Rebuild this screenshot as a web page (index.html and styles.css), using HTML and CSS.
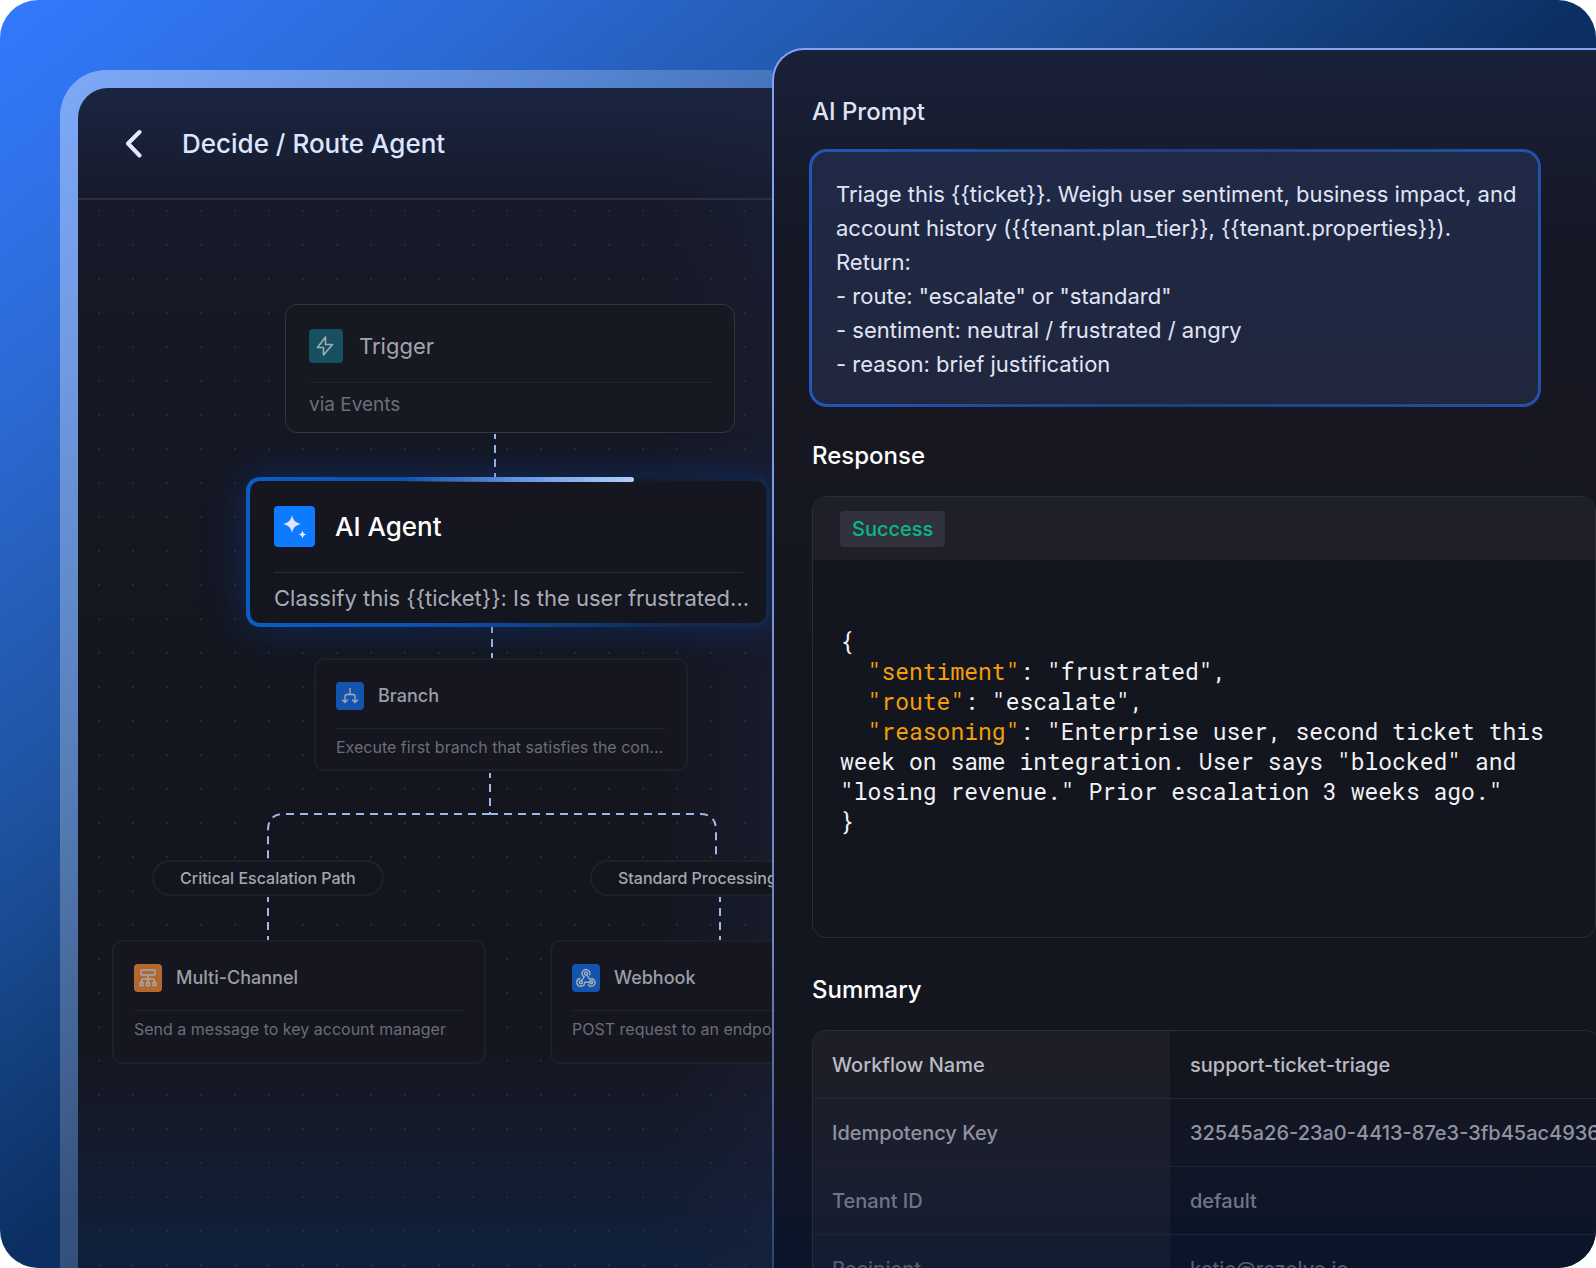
FILE: index.html
```html
<!DOCTYPE html>
<html lang="en">
<head>
    <meta charset="UTF-8">
    <meta name="viewport" content="width=device-width, initial-scale=1.0">
    <title>Decide / Route Agent</title>
    <link rel="stylesheet" href="styles.css">
</head>
<body>
    <main class="stage">

        <!-- Workflow window -->
        <section class="workflow">
            <div class="workflow-body">
                <header class="workflow-header">
                    <button class="back-btn" type="button" aria-label="Back">
                        <svg width="20" height="30" viewBox="0 0 20 30" fill="none" stroke="currentColor" stroke-width="4" stroke-linecap="round" stroke-linejoin="round">
                            <path d="M15.500 4 4 15.500 15.500 27.500"/>
                        </svg>
                    </button>
                    <h1>Decide / Route Agent</h1>
                </header>

                <div class="canvas">
                    <svg class="links" width="694" height="900" fill="none">
                        <g stroke="#9fb8e8" stroke-width="2" stroke-dasharray="8 6">
                            <path d="M417 234v43" stroke-dashoffset="3"/>
                            <path d="M414 427v32" stroke-dashoffset="2"/>
                            <path d="M412 573v41" stroke-dashoffset="3"/>
                            <path d="M412 614H206q-16 0-16 16v30"/>
                            <path d="M412 614h210q16 0 16 16v30"/>
                            <path d="M190 697v43" stroke-dashoffset="3"/>
                            <path d="M642 697v43" stroke-dashoffset="3"/>
                        </g>
                    </svg>

                    <article class="node node-trigger">
                        <div class="node-head">
                            <span class="node-icon teal">
                                <svg width="20" height="20" viewBox="0 0 20 20" fill="none" stroke="currentColor" stroke-width="1.6" stroke-linejoin="round">
                                    <path d="M9.500 1 1.500 11.500H7.500V19L16.500 8.500H9.500Z"/>
                                </svg>
                            </span>
                            <h2>Trigger</h2>
                        </div>
                        <p>via Events</p>
                    </article>

                    <article class="node node-agent">
                        <div class="node-head">
                            <span class="node-icon bright">
                                <svg width="40" height="40" viewBox="0 0 40 40" fill="#dfe6fb">
                                    <path d="M17 8c1.200 5.500 3.400 7.800 9 9-5.600 1.200-7.800 3.500-9 9-1.200-5.500-3.400-7.800-9-9 5.600-1.200 7.800-3.500 9-9z"/>
                                    <path d="M27.500 23.500c.6 2.500 1.500 3.400 4 4-2.500.6-3.400 1.500-4 4-.6-2.500-1.500-3.400-4-4 2.500-.6 3.400-1.500 4-4z"/>
                                </svg>
                            </span>
                            <h2>AI Agent</h2>
                        </div>
                        <p>Classify this {{ticket}}: Is the user frustrated...</p>
                    </article>

                    <article class="node node-small node-branch">
                        <div class="node-head">
                            <span class="node-icon blue">
                                <svg width="18" height="18" viewBox="0 0 18 18" fill="none" stroke="currentColor" stroke-width="1.400" stroke-linecap="round" stroke-linejoin="round">
                                    <path d="M9 1.500v6M4 15.500v-6q0-2 2-2h6q2 0 2 2v6M1.500 13 4 15.500 6.500 13M11.500 13l2.500 2.500 2.500-2.500"/>
                                </svg>
                            </span>
                            <h2>Branch</h2>
                        </div>
                        <p>Execute first branch that satisfies the con...</p>
                    </article>

                    <span class="pill pill-critical">Critical Escalation Path</span>
                    <span class="pill pill-standard">Standard Processing Path</span>

                    <article class="node node-small node-channel">
                        <div class="node-head">
                            <span class="node-icon orange">
                                <svg width="20" height="20" viewBox="0 0 20 20" fill="none" stroke="currentColor" stroke-width="1.400" stroke-linejoin="round">
                                    <rect x="3" y="2" width="14" height="5" rx="1"/>
                                    <path d="M10 7v7.500M3.500 14.500V13q0-2 2-2h9q2 0 2 2v1.500"/>
                                    <rect x="2" y="14.500" width="3.200" height="3.200" rx="1"/>
                                    <rect x="8.400" y="14.500" width="3.200" height="3.200" rx="1"/>
                                    <rect x="14.800" y="14.500" width="3.200" height="3.200" rx="1"/>
                                </svg>
                            </span>
                            <h2>Multi-Channel</h2>
                        </div>
                        <p>Send a message to key account manager</p>
                    </article>

                    <article class="node node-small node-webhook">
                        <div class="node-head">
                            <span class="node-icon blue">
                                <svg width="20" height="20" viewBox="0 0 20 20" fill="none" stroke="currentColor" stroke-width="1.400" stroke-linecap="round" stroke-linejoin="round">
                                    <circle cx="10" cy="5.500" r="1.500"/>
                                    <circle cx="4.800" cy="14.200" r="1.500"/>
                                    <circle cx="15.200" cy="14.200" r="1.500"/>
                                    <path d="M7.200 8.200a3.900 3.900 0 1 1 6.500-1.500M10.800 6.800l2.800 4.400a3.700 3.700 0 1 1-1.200 5.600M15 14.200H8.600a3.900 3.900 0 1 1-4.700-3.700M5.600 12.900l2.600-4.200"/>
                                </svg>
                            </span>
                            <h2>Webhook</h2>
                        </div>
                        <p>POST request to an endpoint</p>
                    </article>
                </div>
            </div>
        </section>

        <!-- Run details panel -->
        <section class="details">
            <label class="section-title" for="prompt">AI Prompt</label>
            <textarea id="prompt" class="prompt" rows="6" readonly>Triage this {{ticket}}. Weigh user sentiment, business impact, and account history ({{tenant.plan_tier}}, {{tenant.properties}}).
Return:
- route: "escalate" or "standard"
- sentiment: neutral / frustrated / angry
- reason: brief justification</textarea>

            <h2 class="section-title">Response</h2>
            <div class="response">
                <div class="response-header">
                    <span class="status">Success</span>
                </div>
                <pre class="code">{
  <span class="key">"sentiment"</span>: "frustrated",
  <span class="key">"route"</span>: "escalate",
  <span class="key">"reasoning"</span>: "Enterprise user, second ticket this week on same integration. User says "blocked" and "losing revenue." Prior escalation 3 weeks ago."
}</pre>
            </div>

            <h2 class="section-title">Summary</h2>
            <div class="summary">
                <table>
                    <tr><th scope="row">Workflow Name</th><td>support-ticket-triage</td></tr>
                    <tr><th scope="row">Idempotency Key</th><td>32545a26-23a0-4413-87e3-3fb45ac4936b</td></tr>
                    <tr><th scope="row">Tenant ID</th><td>default</td></tr>
                    <tr><th scope="row">Recipient</th><td>katie@rezolve.io</td></tr>
                </table>
            </div>
        </section>

    </main>
</body>
</html>
```

FILE: styles.css
```css
* {
    margin: 0;
    padding: 0;
    box-sizing: border-box;
}

body {
    background: #fff;
    font-family: Inter, "Liberation Sans", sans-serif;
}

.stage {
    display: grid;
    grid-template-columns: minmax(0, 772fr) minmax(0, 824fr);
    height: 100vh;
    overflow: hidden;
    border-radius: 38px;
    background: linear-gradient(to bottom right, #3379ff, #2b6ad4 16%, #1e529f 33%, #0b2f62 50%);
}

/* Workflow window */
.workflow {
    margin: 70px 0 0 60px;
    padding: 18px 0 0 18px;
    border-radius: 46px 0 0 0;
    background: linear-gradient(to bottom right, rgba(255, 255, 255, 0.38), rgba(255, 255, 255, 0.12) 60%);
    min-height: 0;
}

.workflow-body {
    display: flex;
    flex-direction: column;
    height: 100%;
    overflow: hidden;
    border-radius: 30px 0 0 0;
    background:
        linear-gradient(to right, rgba(28, 34, 60, 0) 84%, rgba(28, 34, 60, 0.4)),
        linear-gradient(#1b2543, #161a2a 110px, #161824 240px, #14161f 600px, #14161f 960px, #151a2b 1040px, #0f203c);
}

.workflow-header {
    display: flex;
    align-items: center;
    gap: 38px;
    flex: none;
    height: 112px;
    padding-left: 46px;
    border-bottom: 2px solid #2b2f3e;
}

.back-btn {
    display: flex;
    border: none;
    background: none;
    color: #e3eafd;
    cursor: pointer;
}

.workflow-header h1 {
    font-size: 26px;
    font-weight: 500;
    color: #dce6ff;
}

.canvas {
    position: relative;
    flex: 1;
    background: radial-gradient(circle, #262a35 1px, transparent 1px) 4px -6px / 34px 34px;
}

.links {
    position: absolute;
    top: 0;
    left: 0;
}

/* Nodes */
.node {
    position: absolute;
    border: 1px solid #34363f;
    border-radius: 12px;
    background: #161822;
    white-space: nowrap;
}

.node-head {
    display: flex;
    align-items: center;
    border-bottom: 1px solid #22242d;
}

.node h2 {
    font-weight: 500;
}

.node-icon {
    display: flex;
    align-items: center;
    justify-content: center;
    border-radius: 4px;
    color: #a3abba;
}

.teal {
    background: #175161;
}

.bright {
    background: #0d7bff;
}

.blue {
    background: #1354ae;
}

.orange {
    background: #b3682d;
}

.node-trigger {
    top: 104px;
    left: 207px;
    width: 450px;
    height: 129px;
    padding: 0 23px;
}

.node-trigger .node-head {
    gap: 16px;
    height: 78px;
    padding-top: 4px;
}

.node-trigger .node-icon {
    width: 34px;
    height: 34px;
}

.node-trigger h2 {
    font-size: 22px;
    font-weight: 400;
    color: #a3a4ad;
}

.node-trigger p {
    font-size: 19px;
    line-height: 43px;
    color: #6c6e78;
}

.node-agent {
    top: 277px;
    left: 168px;
    width: 524px;
    height: 150px;
    padding: 0 23px 0 24px;
    border: 4px solid transparent;
    border-radius: 14px;
    background:
        linear-gradient(#15161f, #14161f) padding-box,
        linear-gradient(to right, #0b5cc4, #0e4ea6 40%, #132a50 80%, #12274a) border-box;
    box-shadow: 0 0 44px rgba(10, 70, 180, 0.4);
}

/* progress light running along the top edge */
.node-agent::before {
    content: "";
    position: absolute;
    top: -4px;
    left: 150px;
    right: 132px;
    height: 5px;
    border-radius: 0 3px 3px 0;
    background: linear-gradient(to right, rgba(11, 92, 196, 0), #5f94e4 50%, #b3cffb);
}

.node-agent::after {
    content: "";
    position: absolute;
    top: -4px;
    right: 8px;
    width: 124px;
    height: 4px;
    background: linear-gradient(to right, #121c30, #122342);
}

.node-agent .node-head {
    gap: 20px;
    height: 92px;
    border-color: #2b2d36;
}

.node-agent .node-icon {
    width: 41px;
    height: 41px;
}

.node-agent h2 {
    font-size: 26px;
    color: #fff;
}

.node-agent p {
    font-size: 22px;
    line-height: 50px;
    color: #a9abb4;
}

.node-small {
    width: 374px;
    padding: 0 20px;
    border: 2px solid #1e2029;
    border-radius: 10px;
    background: #15161f;
}

.node-small .node-head {
    gap: 14px;
    height: 69px;
    padding-top: 3px;
}

.node-small .node-icon {
    width: 28px;
    height: 28px;
}

.node-small h2 {
    font-size: 18px;
    color: #9c9da6;
}

.node-small p {
    font-size: 16px;
    line-height: 36px;
    color: #6b6d77;
}

.node-branch {
    top: 458px;
    left: 236px;
    height: 113px;
}

.node-channel {
    top: 740px;
    left: 34px;
    height: 124px;
}

.node-webhook {
    top: 740px;
    left: 472px;
    height: 124px;
}

.pill {
    position: absolute;
    top: 660px;
    padding: 0 26px;
    border: 2px solid #1f212a;
    border-radius: 18px;
    background: #14161f;
    color: #a6a7af;
    font-size: 16px;
    font-weight: 500;
    line-height: 32px;
    white-space: nowrap;
}

.pill-critical {
    left: 74px;
}

.pill-standard {
    left: 512px;
}

/* Run details panel */
.details {
    margin-top: 48px;
    padding: 47px 0 0 38px;
    overflow: hidden;
    border: 2px solid transparent;
    border-right: none;
    border-bottom: none;
    border-radius: 32px 0 0 0;
    background:
        linear-gradient(#19213a, #151826 170px, #161721 360px, #14161f 620px, #14161f 1020px, #111627 1120px, #0a142a) padding-box,
        linear-gradient(#84a4f2, #7b9be8 400px, #6f84c0 900px, #2a4470) border-box;
}

.section-title {
    display: block;
    font-size: 24px;
    font-weight: 500;
    line-height: 30px;
    color: #fff;
}

label.section-title {
    color: #dfe4f6;
}

.prompt {
    display: block;
    width: calc(100% - 52px);
    height: 258px;
    margin: 22px 0 34px -3px;
    padding: 25px 12px 20px 24px;
    border: 3px solid transparent;
    border-radius: 18px;
    outline: none;
    resize: none;
    overflow: hidden;
    background:
        linear-gradient(#1f2946, #20263d) padding-box,
        linear-gradient(to right, #2455b8, #1f3f80 50%, #2450a8) border-box;
    color: #e0e5f5;
    font-family: inherit;
    font-size: 22px;
    line-height: 34px;
}

.response {
    height: 442px;
    margin: 25px 0 37px;
    overflow: hidden;
    border: 1px solid #2a2c36;
    border-radius: 14px;
    background: #14161f;
}

.response-header {
    display: flex;
    align-items: center;
    height: 63px;
    padding: 0 27px;
    background: #1e1f29;
}

.status {
    padding: 0 12px;
    border-radius: 4px;
    background: #31323d;
    color: #0bb783;
    font-size: 20px;
    font-weight: 500;
    line-height: 36px;
}

.code {
    padding: 66px 27px 0;
    color: #f1f2f5;
    font-family: "Roboto Mono", "Liberation Mono", monospace;
    font-size: 23px;
    line-height: 30px;
    white-space: pre-wrap;
}

.key {
    color: #f59e0b;
}

.summary {
    width: calc(100% + 4px);
    margin-top: 25px;
    overflow: hidden;
    border: 1px solid #2a2c36;
    border-radius: 14px;
}

table {
    width: 100%;
    table-layout: fixed;
    border-spacing: 0;
}

th,
td {
    height: 68px;
    padding: 1px 20px 0;
    border-bottom: 1px solid #282a34;
    font-size: 20px;
    font-weight: 500;
    text-align: left;
    white-space: nowrap;
}

th {
    width: 357px;
    padding-left: 19px;
    background: rgba(255, 240, 245, 0.04);
}

td {
    overflow: hidden;
}

tr {
    color: #b9bac2;
}

tr:nth-child(2) {
    color: #9193a0;
}

tr:nth-child(3) {
    color: #717585;
}

tr:nth-child(4) {
    color: #525a6e;
}

tr:nth-child(n + 2) > * {
    border-color: #1f2435;
}
```
